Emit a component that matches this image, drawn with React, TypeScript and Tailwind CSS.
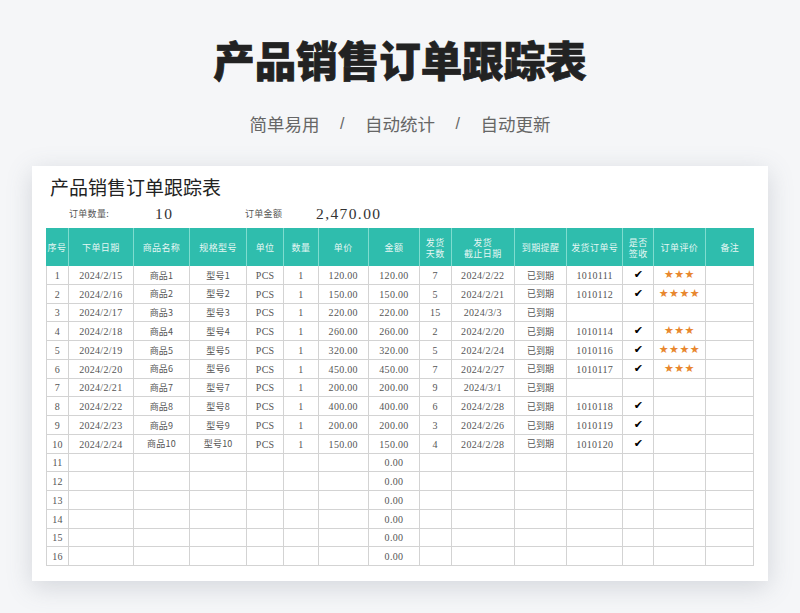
const sans = 'font-["Noto_Sans_CJK_SC",sans-serif]';

const headers = [
  '序号', '下单日期', '商品名称', '规格型号', '单位', '数量', '单价', '金额',
  '发货\n天数', '发货\n截止日期', '到期提醒', '发货订单号', '是否\n签收', '订单评价', '备注',
];

type Order = { price: string; days: string; due: string; no?: string; stars?: number };

const orders: Order[] = [
  { price: '120.00', days: '7', due: '2024/2/22', no: '1010111', stars: 3 },
  { price: '150.00', days: '5', due: '2024/2/21', no: '1010112', stars: 4 },
  { price: '220.00', days: '15', due: '2024/3/3' },
  { price: '260.00', days: '2', due: '2024/2/20', no: '1010114', stars: 3 },
  { price: '320.00', days: '5', due: '2024/2/24', no: '1010116', stars: 4 },
  { price: '450.00', days: '7', due: '2024/2/27', no: '1010117', stars: 3 },
  { price: '200.00', days: '9', due: '2024/3/1' },
  { price: '400.00', days: '6', due: '2024/2/28', no: '1010118' },
  { price: '200.00', days: '3', due: '2024/2/26', no: '1010119' },
  { price: '150.00', days: '4', due: '2024/2/28', no: '1010120' },
];

function Cell({ children, num, first }: { children?: React.ReactNode; num?: boolean; first?: boolean }) {
  return (
    <div
      className={`flex items-center justify-center border-r border-b border-[#d3d3d3] pt-[1px] text-[9px] text-[#555] whitespace-nowrap ${first ? 'border-l' : ''} ${num ? 'font-["Liberation_Serif",serif] text-[10px] tracking-[0.3px] text-[#444]' : ''}`}
    >
      {children}
    </div>
  );
}

function Row({ index, order }: { index: number; order?: Order }) {
  if (!order) {
    return (
      <>
        <Cell first num>{index}</Cell>
        {Array.from({ length: 6 }, (_, i) => <Cell key={i} />)}
        <Cell num>0.00</Cell>
        {Array.from({ length: 7 }, (_, i) => <Cell key={i} />)}
      </>
    );
  }
  return (
    <>
      <Cell first num>{index}</Cell>
      <Cell num>2024/2/{14 + index}</Cell>
      <Cell><span className="tracking-[0.2px]">商品{index}</span></Cell>
      <Cell><span className="tracking-[0.2px]">型号{index}</span></Cell>
      <Cell num>PCS</Cell>
      <Cell num>1</Cell>
      <Cell num>{order.price}</Cell>
      <Cell num>{order.price}</Cell>
      <Cell num>{order.days}</Cell>
      <Cell num>{order.due}</Cell>
      <Cell>已到期</Cell>
      <Cell num>{order.no}</Cell>
      <Cell>
        {order.no && <span className='font-["DejaVu_Sans",sans-serif] text-[11px] text-black'>✔</span>}
      </Cell>
      <Cell>
        {order.stars && (
          <span className='font-["DejaVu_Sans",sans-serif] text-[11px] tracking-[0.4px] text-[#e8872e]'>{'★'.repeat(order.stars)}</span>
        )}
      </Cell>
      <Cell />
    </>
  );
}

export default function App() {
  const rows = Array.from({ length: 16 }, (_, i) => i);

  return (
    <div className={`h-[613px] w-[800px] overflow-hidden bg-[#f5f6f8] ${sans}`}>
      <h1 className="pt-[29px] text-center text-[41.5px] leading-[60px] font-black text-[#222] [-webkit-text-stroke:0.7px_#222]">
        产品销售订单跟踪表
      </h1>

      <div className="mt-[22px] flex items-center justify-center gap-[20.5px] text-[17.5px] leading-[26px] text-[#666]">
        <span>简单易用</span>
        <span className="font-['Liberation_Sans',sans-serif] text-[16px]">/</span>
        <span>自动统计</span>
        <span className="font-['Liberation_Sans',sans-serif] text-[16px]">/</span>
        <span>自动更新</span>
      </div>

      <div className="mx-[32px] mt-[29px] h-[415px] bg-white pt-[8px] pl-[14px] shadow-[0_6px_24px_rgba(90,100,120,0.22)]">
        <div className="pl-[4px] text-[19px] leading-[25px] text-[#222]">产品销售订单跟踪表</div>

        <div className="mt-[5px] flex h-[20px] items-center text-[9px] tracking-[0.3px] text-[#555]">
          <span className="ml-[23px] w-[86px]">订单数量:</span>
          <span className="w-[90px] font-['Liberation_Serif',serif] text-[15.5px] tracking-[1.4px] text-[#333]">10</span>
          <span className="w-[71px]">订单金额</span>
          <span className="font-['Liberation_Serif',serif] text-[15.5px] tracking-[1.4px] text-[#333]">2,470.00</span>
        </div>

        <div className="mt-[4px] grid w-[708px] grid-cols-[23px_64.6px_56.7px_56.7px_37.3px_34.3px_50.4px_51px_31.6px_63.4px_52.3px_56px_31px_51.3px_48.6px] grid-rows-[38px] auto-rows-[18.75px]">
          {headers.map((label, i) => (
            <div
              key={i}
              className={`flex items-center justify-center whitespace-pre-line bg-[#2fbdad] pt-[1px] text-center text-[9px] leading-[11px] tracking-[0.4px] text-[#e6f7f4] ${i < headers.length - 1 ? 'border-r border-[#7fdccf]' : ''}`}
            >
              {label}
            </div>
          ))}
          {rows.map(i => <Row key={i} index={i + 1} order={orders[i]} />)}
        </div>
      </div>
    </div>
  );
}
